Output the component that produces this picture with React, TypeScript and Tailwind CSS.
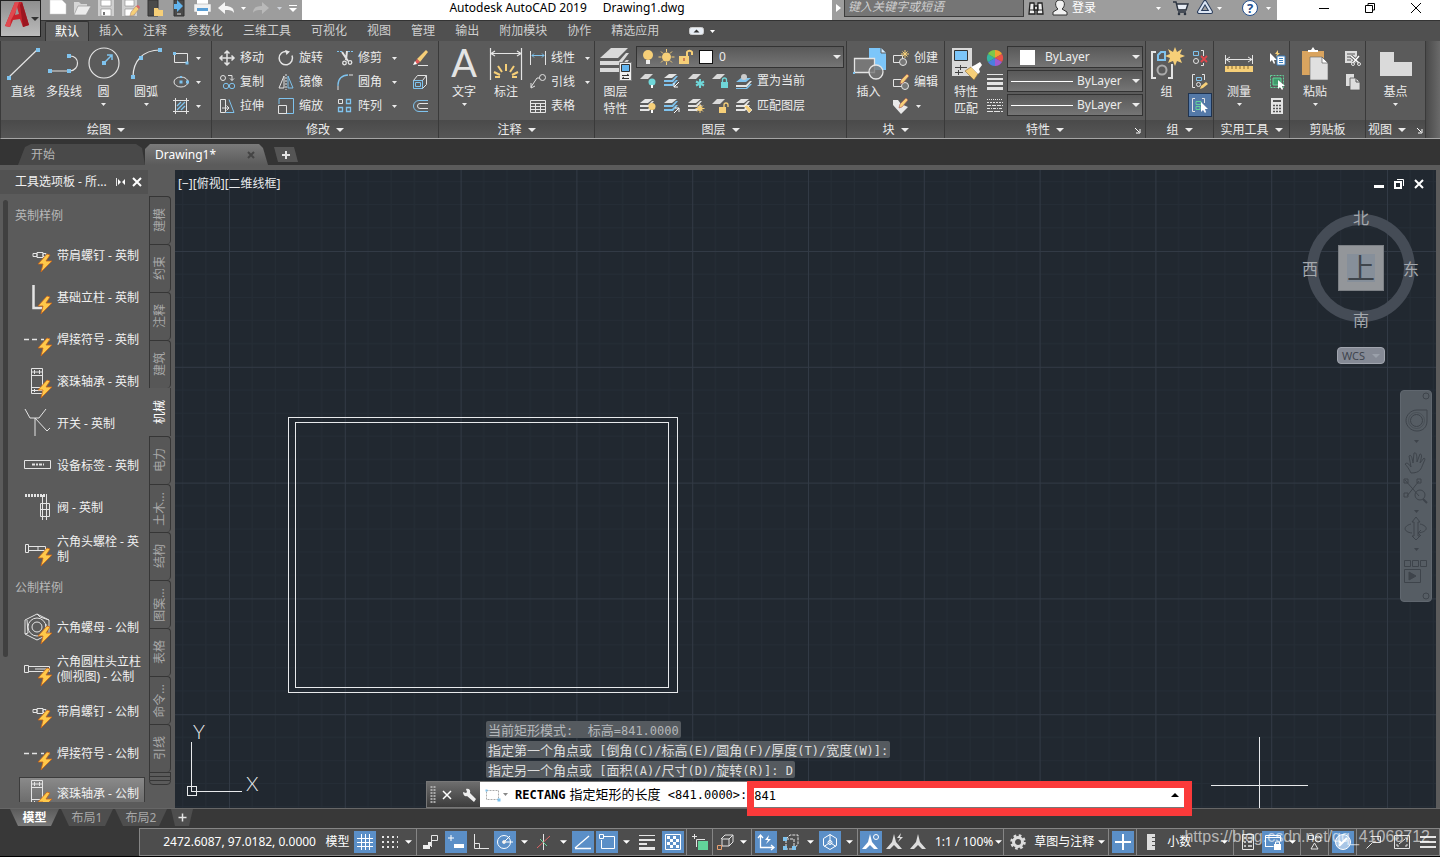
import type { ReactNode } from 'react';
import clsx from 'clsx';

const L = '#e4e4e4';
const B = '#7fc3ee';
const Y = '#f6cf78';
const G = '#62d39a';
const T = '#6fd6d8';

interface IconProps {
  w?: number;
  h?: number;
  children: ReactNode;
}

function Icon({ w = 16, h = 16, children }: IconProps) {
  return (
    <svg
      width={w}
      height={h}
      viewBox={`0 0 ${w} ${h}`}
      fill="none"
      stroke={L}
      className="shrink-0 overflow-visible"
      aria-hidden="true"
    >
      {children}
    </svg>
  );
}

function Dot({ x, y, r = 2 }: { x: number; y: number; r?: number }) {
  return <rect x={x - r} y={y - r} width={r * 2} height={r * 2} fill={B} stroke="none" />;
}

function Caret({ className }: { className?: string }) {
  return (
    <svg width="5" height="3" viewBox="0 0 5 3" className={clsx('shrink-0 fill-current', className)} aria-hidden="true">
      <path d="M0 0h5L2.5 3z" />
    </svg>
  );
}

function BigCaret({ className }: { className?: string }) {
  return (
    <svg width="8" height="4" viewBox="0 0 8 4" className={clsx('shrink-0 fill-current', className)} aria-hidden="true">
      <path d="M0 0h8L4 4z" />
    </svg>
  );
}

function Launcher() {
  return (
    <Icon w={7} h={7}>
      <path d="M1 1l4 4M6 2v4H2" stroke="#fff" />
    </Icon>
  );
}

/* ---------- title bar ---------- */

const quickIcons: { name: string; icon: ReactNode }[] = [
  {
    name: '新建',
    icon: <path d="M1 0h12l4 4v10H1z" fill="#fff" stroke="#ccc" strokeWidth=".5" />,
  },
  {
    name: '打开',
    icon: (
      <>
        <path d="M1 15V2h5l2 2h6v3" fill="#d6d6d6" stroke="none" />
        <path d="M1 15L5 6h13l-5 9z" fill="#ececec" stroke="#999" strokeWidth=".7" />
      </>
    ),
  },
  {
    name: '保存',
    icon: (
      <>
        <path d="M1 0h16v16H1z" fill="#cfcfcf" stroke="none" />
        <path d="M4 0h10v6H4zM4 9h10v7H4z" fill="#fff" stroke="#888" strokeWidth=".6" />
        <path d="M7 12v3" stroke="#777" strokeWidth="2" />
      </>
    ),
  },
  {
    name: '另存为',
    icon: (
      <>
        <path d="M1 0h15v16H1z" fill="#cfcfcf" stroke="none" />
        <path d="M4 0h9v6H4zM4 9h9v7H4z" fill="#fff" stroke="#888" strokeWidth=".6" />
        <path d="M9 16l1-4 5-6 3 3-5 6z" fill={Y} stroke="#a87" strokeWidth=".6" />
        <path d="M15 6l3 3 1-2-2-2z" fill="#d66" stroke="none" />
      </>
    ),
  },
  {
    name: '从移动设备打开',
    icon: (
      <>
        <path d="M3 0h10v16H3z" fill="#4a4a4a" stroke="#333" />
        <path d="M9 16V8h4l1 2h4v6z" fill={Y} stroke="none" />
      </>
    ),
  },
  {
    name: '保存到移动设备',
    icon: (
      <>
        <path d="M5 0h10v16H5z" fill="#4a4a4a" stroke="#333" />
        <path d="M5 4h3V0l6 6-6 6V9H5z" fill="#62b4ee" stroke="none" />
        <path d="M8 14h4" stroke="#ddd" />
      </>
    ),
  },
  {
    name: '打印',
    icon: (
      <>
        <path d="M4 0h11v5H4z" fill="#fff" stroke="none" />
        <path d="M1 4h17v8H1z" fill="#f2f2f2" stroke="#999" strokeWidth=".5" />
        <path d="M4 8h11v3H4z" fill="#5a9fd6" stroke="none" />
        <path d="M4 11h11v4H4z" fill="#fff" stroke="none" />
      </>
    ),
  },
  {
    name: '放弃',
    icon: <path d="M1 8l7-6v4c6 0 9 2 9 7-2-3-4-3-9-3v4z" fill="#f5f5f5" stroke="none" />,
  },
];

function TitleBar() {
  return (
    <header className="flex h-5 shrink-0 bg-white text-xs leading-4 text-white">
      <div className="flex items-center bg-[#9d9d9d] pb-1 pl-[46px]">
        {quickIcons.map((q) => (
          <button key={q.name} aria-label={q.name} className="flex w-6 justify-center">
            <Icon w={18} h={17}>{q.icon}</Icon>
          </button>
        ))}
        <button aria-label="放弃列表" className="flex w-[10px] justify-center">
          <Caret />
        </button>
        <button aria-label="重做" className="flex w-[26px] justify-center">
          <Icon w={18} h={17}>
            <path d="M17 8l-7-6v4C4 6 1 8 1 13c2-3 4-3 9-3v4z" fill="#b9b9b9" stroke="none" />
          </Icon>
        </button>
        <button aria-label="重做列表" className="flex w-[10px] justify-center text-gray-300">
          <Caret />
        </button>
        <button aria-label="自定义快速访问工具栏" className="flex w-[18px] flex-col items-center gap-0.5">
          <span className="h-px w-2 bg-white" />
          <BigCaret />
        </button>
      </div>

      <h1 className="flex flex-1 items-center justify-center gap-4 whitespace-nowrap pb-1 text-black">
        <span>Autodesk AutoCAD 2019</span>
        <span>Drawing1.dwg</span>
      </h1>

      <div className="flex w-[445px] items-center bg-[#9d9d9d] pb-1">
        <button aria-label="隐藏搜索" className="flex w-3 justify-center">
          <Icon w={5} h={8}>
            <path d="M0 0l5 4-5 4z" fill="#fff" stroke="none" />
          </Icon>
        </button>
        <input
          aria-label="搜索"
          placeholder="键入关键字或短语"
          className="-mt-1 h-[22px] w-[180px] border border-[#3c3c3c] bg-[#757575] px-[3px] italic placeholder:text-[#cfcfcf]"
        />
        <button aria-label="搜索帮助" className="ml-1 w-4">
          <Icon>
            <path d="M2 3h4l1 11H1zM10 3h4l1 11H9zM6 6h4v4H6z" fill="#eee" stroke="#222" strokeWidth="1.3" />
            <path d="M2 10h4M10 10h4" stroke="#222" />
          </Icon>
        </button>
        <button className="ml-2 flex items-center gap-1">
          <Icon>
            <path d="M8 0c6 0 5 7 2 9l5 3v3H1v-3l5-3C3 7 2 0 8 0z" fill="#f2f2f2" stroke="#333" />
          </Icon>
          登录
        </button>
        <Caret className="ml-[60px]" />
        <button aria-label="应用商店" className="ml-3">
          <Icon>
            <path d="M4 4h11l-2 5H5z" fill="#e9eef6" stroke="none" />
            <path d="M0 2h3l2 8h8l2-6H4M5 12h8" stroke="#2b3340" strokeWidth="1.4" />
            <circle cx="6" cy="14" r="1.3" fill="#2b3340" stroke="none" />
            <circle cx="12" cy="14" r="1.3" fill="#2b3340" stroke="none" />
          </Icon>
        </button>
        <button aria-label="保持连接" className="ml-2 flex items-center gap-1">
          <Icon>
            <path d="M8 2L2 12h12z" stroke="#2b3d5c" strokeWidth="4" strokeLinejoin="round" />
            <path d="M8 2L2 12h12z" stroke="#dde7f5" strokeWidth="2" strokeLinejoin="round" />
          </Icon>
          <Caret />
        </button>
        <button aria-label="帮助" className="ml-5 flex items-center gap-2">
          <span className="flex size-4 items-center justify-center rounded-full border border-[#24508e] bg-white text-[13px] font-bold text-[#24508e]">
            ?
          </span>
          <Caret />
        </button>
      </div>

      <div className="flex w-[163px] items-center gap-[34px] pb-1 pl-[41px]">
        <button aria-label="最小化"><Icon w={12} h={12}><path d="M1 6.5h10" stroke="#000" /></Icon></button>
        <button aria-label="还原">
          <Icon w={12} h={12}><path d="M1.5 3.5h7v7h-7zM4 3V1.5h6.500V8H9" stroke="#000" /></Icon>
        </button>
        <button aria-label="关闭"><Icon w={12} h={12}><path d="M1 1l10 10M11 1L1 11" stroke="#000" /></Icon></button>
      </div>
    </header>
  );
}

function AppButton() {
  return (
    <button
      aria-label="应用程序菜单"
      className="absolute left-0 top-0 z-10 flex h-[37px] w-[41px] items-center border border-[#222] bg-linear-to-b from-[#8f8f8f] to-[#bcbcbc] pl-1 text-[#333]"
    >
      <Icon w={26} h={34}>
        <path d="M0 24L10 0h7l7 23-6 2-3-8-7 1-3 7z" fill="#c8232c" stroke="none" />
        <path d="M10 0h4l-3 9-5 9-1 7-5-1z" fill="#e04a50" stroke="none" />
        <path d="M18 25l6-2L17 0l-2 3z" fill="#9c1620" stroke="none" />
        <path d="M12 5l2 7-4 1z" fill="#9a9a9a" stroke="none" />
      </Icon>
      <BigCaret />
    </button>
  );
}

const ribbonTabs = ['默认', '插入', '注释', '参数化', '三维工具', '可视化', '视图', '管理', '输出', '附加模块', '协作', '精选应用'];

function RibbonTabs() {
  return (
    <nav className="flex h-[21px] shrink-0 items-end border-t border-[#333] bg-[#505050] pl-[45px] text-xs leading-4">
      {ribbonTabs.map((tab, i) => (
        <button
          key={tab}
          className={clsx(
            'h-5',
            i === 0
              ? 'rounded-t-xs border border-b-0 border-[#333] bg-[#5f5f5f] px-[9px] text-white'
              : 'px-[10px] text-[#cfcfcf]',
          )}
        >
          {tab}
        </button>
      ))}
      <button aria-label="最小化功能区" className="ml-5 flex h-5 items-center gap-1.5 text-white">
        <Icon w={15} h={8}>
          <rect x=".5" y=".5" width="14" height="7" rx="2" fill="#e8eef5" stroke="#ccc" />
          <path d="M4.500 5.500h6l-3-3z" fill="#333" stroke="none" />
        </Icon>
        <Caret />
      </button>
    </nav>
  );
}

/* ---------- ribbon ---------- */

interface PanelProps {
  title: string;
  className: string;
  menu?: boolean;
  launcher?: boolean;
  children: ReactNode;
}

function Panel({ title, className, menu = true, launcher, children }: PanelProps) {
  return (
    <section className={clsx('flex shrink-0 flex-col border-r border-[#3a3a3a]', className)}>
      <div className="flex h-[79px] pt-[5px]">{children}</div>
      <div className="relative flex h-[18px] items-center justify-center gap-1.5 bg-linear-to-b from-[#4a4a4a] to-[#565656] pt-0.5">
        <span>{title}</span>
        {menu && <BigCaret />}
        {launcher && (
          <button aria-label={`${title}设置`} className={title === '视图' ? 'ml-1' : 'absolute right-1'}>
            <Launcher />
          </button>
        )}
      </div>
    </section>
  );
}

interface BigButtonProps {
  label: ReactNode;
  className: string;
  caret?: boolean;
  children: ReactNode;
}

function BigButton({ label, className, caret, children }: BigButtonProps) {
  return (
    <button className={clsx('flex shrink-0 flex-col items-center whitespace-nowrap', className)}>
      <Icon w={34} h={36}>{children}</Icon>
      <span className="mt-px leading-[17px]">{label}</span>
      {caret && <Caret className="mt-[3px]" />}
    </button>
  );
}

interface SmallButtonProps {
  label?: string;
  name?: string;
  caret?: boolean;
  children: ReactNode;
}

function SmallButton({ label, name, caret, children }: SmallButtonProps) {
  return (
    <button aria-label={label ?? name} className="flex h-6 items-center whitespace-nowrap">
      <Icon>{children}</Icon>
      {label && <span className="ml-[5px]">{label}</span>}
      {caret && <Caret className={label ? 'ml-[10px]' : 'ml-[7px]'} />}
    </button>
  );
}

function Sheets({ color = L, color2 = L }: { color?: string; color2?: string }) {
  return (
    <g stroke="none">
      <path d="M0 5l5-4h8L8 5z" fill={L} />
      <path d="M0 7h8l4-4h2L9 9H0z" fill={color} />
      <path d="M0 11h8l4-4h2l-5 6H0z" fill={color2} />
    </g>
  );
}

const sheet = <path d="M0 6l5-5h8L8 6z" fill="#d9d9d9" stroke="none" />;

const layerTools: { name: string; icon: ReactNode }[][] = [
  [
    {
      name: '关',
      icon: (
        <>
          {sheet}
          <circle cx="12" cy="9" r="3.500" fill={T} stroke="none" />
          <path d="M11 12h2v3h-2z" fill="#fff" stroke="none" />
        </>
      ),
    },
    { name: '隔离', icon: <><Sheets color={B} color2={B} /><path d="M15 9l-5 5m0-4v4h4" stroke="#fff" /></> },
    {
      name: '冻结',
      icon: <>{sheet}<path d="M12 6v9M8 8.500l8 4M16 8.500l-8 4" stroke={T} strokeWidth="2" /></>,
    },
    {
      name: '锁定',
      icon: (
        <>
          {sheet}
          <path d="M9 9h7v6H9z" fill={T} stroke="none" />
          <path d="M10.500 9V7a2 2 0 014 0v2" stroke={T} strokeWidth="1.300" />
        </>
      ),
    },
  ],
  [
    {
      name: '打开所有图层',
      icon: (
        <>
          <Sheets />
          <circle cx="12" cy="8.500" r="3.500" fill={Y} stroke="none" />
          <path d="M11 12h2v3h-2z" fill="#fff" stroke="none" />
        </>
      ),
    },
    { name: '取消隔离', icon: <><Sheets color={B} color2={B} /><path d="M10 15l5-5m-4 0h4v4" stroke="#fff" /></> },
    {
      name: '解冻所有图层',
      icon: (
        <>
          <Sheets />
          <path d="M12 6v9M7.500 10.500h9M9 7.500l6 6M15 7.500l-6 6" stroke={Y} />
          <circle cx="12" cy="10.500" r="2.500" fill={Y} stroke="none" />
        </>
      ),
    },
    {
      name: '解锁',
      icon: (
        <>
          {sheet}
          <path d="M7 9h7v6H7z" fill={Y} stroke="none" />
          <path d="M12 9V7a2 2 0 014 0v2" stroke={Y} strokeWidth="1.300" />
        </>
      ),
    },
  ],
];

function Combo({ label, value, lead, className }: { label: string; value: string; lead: ReactNode; className: string }) {
  return (
    <label className="flex h-[22px] items-center border border-[#333] bg-linear-to-b from-[#595959] to-[#757575] pr-[2px]">
      {lead}
      <select aria-label={label} className={clsx('min-w-0 flex-1 appearance-none leading-4 outline-none', className)}>
        <option>{value}</option>
      </select>
      <BigCaret />
    </label>
  );
}

function Ribbon() {
  return (
    <div className="flex h-[98px] shrink-0 border-b border-l border-b-[#a5a5a5] border-l-[#3a3a3a] bg-[#5b5b5b] text-xs leading-4 text-[#ececec]">
      <Panel title="绘图" className="w-[211px]">
        <BigButton label="直线" className="w-[44px]">
          <path d="M3 31L32 3" strokeWidth="1.200" />
          <Dot x={3} y={32} />
          <Dot x={32} y={4} />
        </BigButton>
        <BigButton label="多段线" className="w-[38px]">
          <path d="M3 25h20c10-1 10-15 0-15" strokeWidth="1.200" />
          <Dot x={3} y={25} />
          <Dot x={22} y={25} />
          <Dot x={22} y={10} />
        </BigButton>
        <BigButton label="圆" className="w-[41px]" caret>
          <circle cx="17" cy="17" r="15" strokeWidth="1.200" />
          <path d="M17 17l8-8m-5 0h5v5" stroke={B} strokeWidth="1.500" />
          <Dot x={17} y={17} />
        </BigButton>
        <BigButton label="圆弧" className="w-[44px]" caret>
          <path d="M4 31C4 15 14 4 31 4" strokeWidth="1.200" />
          <Dot x={4} y={31} />
          <Dot x={12} y={12} />
          <Dot x={31} y={4} />
        </BigButton>
        <div className="flex flex-col pl-[5px]">
          <SmallButton name="矩形" caret>
            <path d="M1.500 3.500h13v9h-13z" />
            <Dot x={1.500} y={3.500} r={1.500} />
            <Dot x={14} y={13} r={1.500} />
          </SmallButton>
          <SmallButton name="椭圆" caret>
            <ellipse cx="8" cy="8" rx="7" ry="5" />
            <Dot x={8} y={8} r={1.500} />
            <Dot x={14.500} y={8} r={1.500} />
            <Dot x={8} y={3} r={1} />
          </SmallButton>
          <SmallButton name="图案填充" caret>
            <path d="M2.500 0v16M13.500 0v16M0 2.500h16M0 13.500h16" />
            <path d="M4 8l4-4M4 12l8-8M8 12l4-4" stroke={B} strokeWidth="1.300" />
          </SmallButton>
        </div>
      </Panel>

      <Panel title="修改" className="w-[227px]">
        <div className="ml-[7px] w-[59px]">
          <SmallButton label="移动">
            <path d="M8 1v14M1 8h14M5.500 3.500L8 1l2.500 2.500M5.500 12.500L8 15l2.500-2.500M3.500 5.500L1 8l2.500 2.500M12.500 5.500L15 8l-2.500 2.500" strokeWidth="1.500" />
          </SmallButton>
          <SmallButton label="复制">
            <circle cx="4" cy="4" r="2.500" />
            <path d="M9 1.500h4v5m-2-2l2 2 2-2" />
            <circle cx="7" cy="12" r="2.700" stroke={B} />
            <circle cx="13" cy="12" r="2.700" stroke={B} />
          </SmallButton>
          <SmallButton label="拉伸">
            <path d="M1.500 1.500h5v13h-5z" />
            <path d="M10 1.500l5 13H7" stroke={B} />
            <path d="M3 10h7m-2.500-2.500L10 10l-2.500 2.500" />
          </SmallButton>
        </div>
        <div className="w-[59px]">
          <SmallButton label="旋转">
            <path d="M9 1.500a6.700 6.700 0 105 4" strokeWidth="1.500" />
            <path d="M7 0l5 1.500L8.500 5z" fill={L} stroke="none" />
          </SmallButton>
          <SmallButton label="镜像">
            <path d="M6 2v12H1z" />
            <path d="M10 2v12h5z" stroke={B} />
            <path d="M8 0v16" strokeDasharray="2 1" />
          </SmallButton>
          <SmallButton label="缩放">
            <path d="M1 6V.500h14.500v15H8" stroke={B} />
            <path d="M.500 7.500h8v8h-8z" />
          </SmallButton>
        </div>
        <div className="w-[75px]">
          <SmallButton label="修剪" caret>
            <path d="M0 1.500h5M11 1.500h5" stroke={B} strokeDasharray="2 1" />
            <path d="M5 2l6 9M10 1l-1 9" strokeWidth="2" />
            <circle cx="7.500" cy="13" r="1.800" strokeWidth="1.300" />
            <circle cx="13" cy="12.500" r="1.800" strokeWidth="1.300" />
          </SmallButton>
          <SmallButton label="圆角" caret>
            <path d="M1 12v-1C1 5 5 1 11 1" stroke={B} strokeWidth="1.300" />
            <path d="M12 1h4M1 12v4" />
          </SmallButton>
          <SmallButton label="阵列" caret>
            <path d="M1.500 1.500h4v4h-4z" />
            <path d="M9.500 1.500h4v4h-4zM1.500 9.500h4v4h-4zM9.500 9.500h4v4h-4z" stroke={B} strokeWidth="1.300" />
          </SmallButton>
        </div>
        <div>
          <SmallButton name="删除">
            <path d="M5 9l9-9 2 2-8 10z" fill={Y} stroke="none" />
            <path d="M5 9l3 3-3 2-2-2z" fill="#e55a5a" stroke="none" />
            <path d="M3 11l2 3-4 1z" fill="#fff" stroke="none" />
            <path d="M6 15.500h10" />
          </SmallButton>
          <SmallButton name="分解">
            <path d="M1.500 6.500h9v8h-9zM3.500 8.500h5v4h-5z" stroke={B} />
            <path d="M1.500 6.500l4-5h9l-4 5M14.500 1.500v9l-4 4" />
          </SmallButton>
          <SmallButton name="偏移">
            <path d="M16 2.500H7a5.500 5.500 0 000 11h9" stroke={B} />
            <path d="M16 5.500H8a2.500 2.500 0 000 5h8" />
          </SmallButton>
        </div>
      </Panel>

      <Panel title="注释" className="w-[156px]">
        <BigButton label="文字" className="ml-1 w-[42px]" caret>
          <text x="17" y="31" textAnchor="middle" fontSize="38" fill={L} stroke="none" className="font-['Lato']">
            A
          </text>
        </BigButton>
        <BigButton label="标注" className="w-[42px]">
          <path d="M1.500 2v32M32.500 2v32M2 7.500h30M6 5L2 7.500 6 10M28 5l4 2.500-4 2.500" strokeWidth="1.200" />
          <path d="M17 18v7M9 20l4 6M25 20l-4 6M5 26l6 3M29 26l-6 3M6 31h5M23 31h5" stroke={Y} strokeWidth="2" />
        </BigButton>
        <div className="ml-[3px]">
          <SmallButton label="线性" caret>
            <path d="M.500 1v14M15.500 1v14" />
            <path d="M2 5.500h12M4 3.500l-2 2 2 2M12 3.500l2 2-2 2" stroke={B} />
          </SmallButton>
          <SmallButton label="引线" caret>
            <circle cx="12.500" cy="3.500" r="3" />
            <path d="M10 4H7l-6 9M1 9v5l4-2" />
          </SmallButton>
          <SmallButton label="表格">
            <path d="M.500 2.500h15v12H.500zM.500 5.500h15M.500 8.500h15M.500 11.500h15M5.500 5v9M10.500 5v9" />
          </SmallButton>
        </div>
      </Panel>

      <Panel title="图层" className="w-[252px]">
        <BigButton label={<>图层<br />特性</>} className="w-[41px]">
          <g fill="#d9d9d9" stroke="none">
            <path d="M1 12L12 2h17L19 12z" />
            <path d="M1 15h19l7-8h3l-9 12H1z" />
            <path d="M1 22h19l7-8h3l-9 12H1z" />
          </g>
          <path d="M20.500 16.500h12v18h-12z" fill="#f0f0f0" stroke="#777" />
          <path d="M22.500 18.500h8v7h-8z" fill="#62b4ee" stroke="#333" />
          <path d="M23 29.500h7l-2-1.500M30 32.500h-7l2-1.500" stroke="#333" />
        </BigButton>
        <div className="min-w-0 flex-1 pr-[2px]">
          <Combo
            label="图层"
            value="0"
            className="pl-1"
            lead={
              <Icon w={78} h={18}>
                <g stroke="none" fill={Y}>
                  <circle cx="11" cy="7" r="5" />
                  <circle cx="29.500" cy="9" r="4.500" />
                  <path d="M42 8h10v8H42z" />
                </g>
                <path d="M9 12h4v4H9z" fill="#eee" stroke="none" />
                <path d="M29.500 1v3M29.500 14v3M21.500 9h3M34.500 9h3M24 3.500l2 2M35 3.500l-2 2M24 14.500l2-2M35 14.500l-2-2" stroke={Y} />
                <path d="M50 8V4a3 3 0 015 0v3" stroke={Y} strokeWidth="2" />
                <path d="M47 10v3" stroke="#a33" />
                <rect x="62.500" y="2.500" width="13" height="13" fill="#fff" stroke="#111" />
              </Icon>
            }
          />
          {layerTools.map((row, i) => (
            <div key={i} className="mt-px flex h-6 items-center">
              {row.map((tool) => (
                <div key={tool.name} className="flex w-6 justify-center">
                  <SmallButton name={tool.name}>{tool.icon}</SmallButton>
                </div>
              ))}
              <div className="ml-1">
                {i === 0 ? (
                  <SmallButton label="置为当前">
                    <path d="M0 9l5-4h10l-5 4z" fill={B} stroke="none" />
                    <path d="M0 12h10l4-4h2l-5 6H0z" fill={L} stroke="none" />
                    <path d="M0 15h10l4-4h2l-5 5H0z" fill={B} stroke="none" />
                    <circle cx="8" cy="4" r="3" fill="#ccc" stroke="none" />
                  </SmallButton>
                ) : (
                  <SmallButton label="匹配图层">
                    <Sheets />
                    <path d="M8 8l3-1 5 5-3 3z" fill={Y} stroke="#fff" strokeWidth=".6" />
                  </SmallButton>
                )}
              </div>
            </div>
          ))}
        </div>
      </Panel>

      <Panel title="块" className="w-[98px]">
        <BigButton label="插入" className="w-[43px]">
          <path d="M17 2h12l5 5v17H17z" fill="#7cc6fa" stroke="none" />
          <path d="M29 2v5h5" fill="#d5ecff" stroke="#5b5b5b" />
          <path d="M2.500 12.500h20v14h-20z" fill="#777" strokeWidth="1.300" />
          <circle cx="24" cy="26" r="7" fill="#777" fillOpacity=".8" strokeWidth="1.300" />
          <Dot x={2} y={27} r={1} />
        </BigButton>
        <div className="ml-[3px]">
          <SmallButton label="创建">
            <path d="M.500 5.500h9v7h-9z" />
            <circle cx="10" cy="12" r="3.500" fill="#777" />
            <path d="M12 0v8M8 4h8M9.500 1.500l5 5M14.500 1.500l-5 5" stroke={Y} />
          </SmallButton>
          <SmallButton label="编辑">
            <path d="M.500 5.500h9v7h-9z" />
            <circle cx="12" cy="12" r="3.500" fill="#777" />
            <path d="M7 10l1-4 6-6 2 2-6 7z" fill={Y} stroke="#a55" strokeWidth=".6" />
          </SmallButton>
          <SmallButton name="编辑属性" caret>
            <path d="M0 2h5l3 4 7 3-7 7-8-9z" fill="#e9e9e9" stroke="none" />
            <path d="M6 10l1-4 6-6 2 2-6 7z" fill={Y} stroke="#a55" strokeWidth=".6" />
          </SmallButton>
        </div>
      </Panel>

      <Panel title="特性" className="w-[201px]" launcher>
        <BigButton label={<>特性<br />匹配</>} className="w-[42px]">
          <path d="M3 2h20v28H3z" fill="#d9d9d9" stroke="none" />
          <path d="M5.500 4.500h13v10h-13z" fill="#7cc6fa" stroke="#333" />
          <path d="M6 21.500h12M6 26.500h8M11.500 19v5M9.500 24v5" stroke="#444" />
          <path d="M16 25l6-4 7 7-4 6z" fill={Y} stroke="#8a6a30" strokeWidth=".6" />
          <path d="M22 21l4-2 5-3 2 3-3 4 1 3-2 2z" fill="#fff" stroke="none" />
        </BigButton>
        <div className="flex w-5 flex-col">
          <SmallButton name="颜色">
            <g stroke="none">
              <path d="M8 8V0a8 8 0 017 4z" fill="#f0a030" />
              <path d="M8 8l7-4a8 8 0 010 8z" fill="#e8504a" />
              <path d="M8 8l7 4a8 8 0 01-7 4z" fill="#a05ad0" />
              <path d="M8 8v8a8 8 0 01-7-4z" fill="#4a7fe0" />
              <path d="M8 8l-7 4a8 8 0 010-8z" fill="#35b5a0" />
              <path d="M8 8L1 4a8 8 0 017-4z" fill="#7cc84a" />
            </g>
          </SmallButton>
          <SmallButton name="线宽">
            <path d="M0 .500h16" />
            <path d="M0 5h16" strokeWidth="2" />
            <path d="M0 9.500h16" strokeWidth="3" />
            <path d="M0 14.500h16" strokeWidth="3" />
          </SmallButton>
          <SmallButton name="线型">
            <path d="M0 1.500h16" strokeDasharray="1 1" />
            <path d="M0 4.500h16" strokeDasharray="2 1" />
            <path d="M0 7.500h16" strokeDasharray="4 1" />
            <path d="M0 10.500h16" strokeDasharray="3 1 1 1" />
            <path d="M0 13.500h16" strokeDasharray="6 1" />
          </SmallButton>
        </div>
        <div className="flex min-w-0 flex-1 flex-col gap-0.5 pr-[2px]">
          <Combo label="对象颜色" value="ByLayer" className="pl-2.5" lead={<span className="ml-3 size-[15px] bg-white" />} />
          <Combo label="线宽" value="ByLayer" className="pl-1" lead={<span className="ml-[3px] h-px w-[62px] bg-white" />} />
          <Combo label="线型" value="ByLayer" className="pl-1" lead={<span className="ml-[3px] h-px w-[62px] bg-white" />} />
        </div>
      </Panel>

      <Panel title="组" className="w-[68px]">
        <BigButton label="组" className="w-[41px]">
          <path d="M6 6H2v26h4M18 32h4V18" strokeWidth="2" />
          <path d="M8 14V9l3-3h4v8z" stroke={B} strokeWidth="2" />
          <circle cx="12" cy="24" r="4.500" stroke="#aaa" strokeWidth="2" />
          <path d="M25 1l2 5 5-3-2 5 5 2-5 2 2 5-5-2-2 5-2-5-5 2 2-5-5-2 5-2-2-5 5 3z" fill={Y} stroke="none" />
        </BigButton>
        <div className="flex flex-1 flex-col items-center">
          <SmallButton name="解除编组">
            <path d="M1.500 1.500h5v4h-5z" stroke={B} />
            <circle cx="4" cy="11" r="2.500" />
            <path d="M9 .500h2.500V6M11.500 13v2.500H9" />
            <path d="M9 6l6 6M15 6l-6 6" stroke="#e0454a" strokeWidth="1.800" />
          </SmallButton>
          <SmallButton name="组编辑">
            <path d="M3 .500H.500v13H3M10 .500h2.500V6" />
            <path d="M4.500 3.500h5v3h-5z" stroke={B} />
            <circle cx="6.500" cy="10.500" r="2" />
            <path d="M8 15l1-3 5-4 2 2-5 4z" fill={Y} stroke="none" />
          </SmallButton>
          <div className="-mt-px flex w-6 justify-center border border-[#1f3350] bg-[#5479a8]">
            <div className="-my-px">
              <SmallButton name="启用组选择">
                <path d="M3 1.500H.500v13H3M10 1.500h2.500V6" />
                <path d="M4 4.500h5v3H4zM4 9.500h4v3H4z" stroke={G} />
                <path d="M9 5v10l2-2 2 3 1-1-1-3h3z" fill="#fff" stroke="none" />
              </SmallButton>
            </div>
          </div>
        </div>
      </Panel>

      <Panel title="实用工具" className="w-[76px]">
        <BigButton label="测量" className="w-[50px]" caret>
          <path d="M3.500 9v9M30.500 9v9M4 13.500h26M8 11l-4 2.500L8 16M26 11l4 2.500-4 2.500" />
          <path d="M3 20h28v6H3z" fill={Y} stroke="none" />
          <path d="M6 20v3M10 20v3M14 20v3M18 20v3M22 20v3M26 20v3" stroke="#8a6a30" />
        </BigButton>
        <div className="flex flex-1 flex-col items-center">
          <SmallButton name="快速选择">
            <path d="M9 0L6 4h2l-1 3 4-4H9z" fill={Y} stroke="none" />
            <path d="M1 3v9l2-2 2 4 1-1-1-3h3z" fill="#fff" stroke="none" />
            <path d="M8 6h8v9H8z" fill="#fff" stroke="#3a7fc0" />
            <path d="M10 8.500h4M10 10.500h4M10 12.500h4" stroke="#3a7fc0" />
          </SmallButton>
          <SmallButton name="全部选择">
            <path d="M1.500 1.500h13v12h-13z" stroke={G} strokeDasharray="2 1" />
            <path d="M4 4h8v7H4z" fill="#3f9a6a" stroke={G} />
            <path d="M9 6v9l2-2 2 3 1-1-1-3h3z" fill="#fff" stroke="none" />
          </SmallButton>
          <SmallButton name="计算器">
            <path d="M2 0h12v16H2z" fill="#e4e4e4" stroke="none" />
            <path d="M4 3h8" stroke="#555" strokeWidth="2" />
            <path d="M4 7.500h8M4 10.500h8M4 13.500h8" stroke="#555" strokeWidth="1.500" strokeDasharray="2 1" />
          </SmallButton>
        </div>
      </Panel>

      <Panel title="剪贴板" className="w-[76px]" menu={false}>
        <BigButton label="粘贴" className="w-[50px]" caret>
          <path d="M4 5h22v24H4z" fill="#d9a45f" stroke="none" />
          <path d="M10 6V4h3l2-3 2 3h3v2z" fill="#fff" stroke="none" />
          <path d="M12 11h12l6 6v17H12z" fill="#e0e0e0" stroke="#666" strokeWidth=".6" />
          <path d="M24 11v6h6z" fill="#fff" stroke="#444" strokeWidth=".6" />
        </BigButton>
        <div className="flex flex-1 flex-col items-center">
          <SmallButton name="剪切">
            <path d="M0 1h12v12H0z" fill="#ddd" stroke="none" />
            <path d="M2 4h8M2 7h4M2 10h4" stroke="#555" />
            <path d="M6 6l8 7M14 6l-6 7" stroke="#5b5b5b" strokeWidth="3" />
            <path d="M6 6l8 7M14 6l-6 7" stroke="#fff" strokeWidth="1.500" />
            <circle cx="8" cy="14" r="1.500" />
            <circle cx="14" cy="14" r="1.500" />
          </SmallButton>
          <SmallButton name="复制裁剪">
            <path d="M1 0h8v12H1z" fill="#ddd" stroke="none" />
            <path d="M5 4h6l4 4v8H5z" fill="#ddd" stroke="#555" strokeWidth=".800" />
            <path d="M11 4v4h4" stroke="#555" />
          </SmallButton>
        </div>
      </Panel>

      <Panel title="视图" className="w-[60px]" launcher>
        <BigButton label="基点" className="w-full" caret>
          <path d="M1 6h14v10h18v14H1z" fill="#dadada" stroke="none" />
        </BigButton>
      </Panel>
      <div className="flex-1 bg-linear-to-r from-[#4a4a4a] to-[#6a6a6a]" />
    </div>
  );
}

function FileTabs() {
  return (
    <nav className="flex h-[26px] shrink-0 items-end bg-[#343434] pl-[18px] text-xs leading-4">
      <button className="h-[21px] w-[127px] bg-[#494949] pl-[13px] text-left text-[#b5b5b5] [clip-path:polygon(0_100%,7px_14%,13px_0,calc(100%-9px)_0,calc(100%-3px)_4px,100%_100%)]">
        开始
      </button>
      <div className="flex h-[21px] w-[123px] items-center bg-linear-to-b from-[#7a7a7a] to-[#5b5b5b] pl-[10px] text-white [clip-path:polygon(0_100%,0_5px,5px_0,calc(100%-9px)_0,calc(100%-5px)_4px,100%_100%)]">
        <button className="flex-1 text-left">Drawing1*</button>
        <button aria-label="关闭图形" className="mr-[13px]">
          <Icon w={8} h={8}><path d="M1 1l6 6M7 1L1 7" stroke="#444" strokeWidth="2" /></Icon>
        </button>
      </div>
      <button
        aria-label="新图形"
        className="mb-[3px] ml-[6px] flex h-[15px] w-6 items-center justify-center bg-[#555] [clip-path:polygon(0_0,calc(100%-4px)_0,100%_100%,4px_100%)]"
      >
        <Icon w={10} h={10}><path d="M1 5h8M5 1v8" strokeWidth="2" /></Icon>
      </button>
    </nav>
  );
}

/* ---------- tool palette ---------- */

const bolt = (
  <path d="M24 17l-9 10h5l-2 8 11-11h-6l4-6z" fill="#ffc94a" stroke="#c8641a" strokeWidth=".800" />
);

const screw = (
  <>
    <path d="M10 16.500h4v3h-4zM14 15.500h6v5h-6zM20 16.500h3v3h-3z" />
    {bolt}
  </>
);
const post = <><path d="M10.500 6v23h9" strokeWidth="2.500" />{bolt}</>;
const weld = <><path d="M1 18.500h5M9 18.500h5M18 18.500h3M24 18.500h3" strokeWidth="1.500" />{bolt}</>;
const bearing = (
  <>
    <path d="M8.500 5.500h11v25h-11zM8.500 12.500h11M8.500 24.500h11M9 9h10M11.500 7v4M16.500 7v4M9 27.500h10M11.500 26v3" />
    {bolt}
  </>
);

const englishItems: { label: string; icon: ReactNode }[] = [
  { label: '带肩螺钉 - 英制', icon: screw },
  { label: '基础立柱 - 英制', icon: post },
  { label: '焊接符号 - 英制', icon: weld },
  { label: '滚珠轴承 - 英制', icon: bearing },
  { label: '开关 - 英制', icon: <path d="M2 4l5 9h9l7-9M12 13v18M12 13l12 13 3-3" /> },
  {
    label: '设备标签 - 英制',
    icon: <><path d="M1.500 13.500h26v8h-26z" /><path d="M9 17.500h12" strokeWidth="2" strokeDasharray="3 1 2 1" /></>,
  },
  {
    label: '阀 - 英制',
    icon: (
      <>
        <path d="M2 6.500h20" strokeWidth="3" strokeDasharray="2 1" />
        <path d="M19.500 6v25M23.500 5v26M17.500 14.500h9v13h-9zM17 20.500h10" />
      </>
    ),
  },
  { label: '六角头螺栓 - 英制', icon: <><path d="M2.500 13.500h3v8h-3zM5.500 15.500h17v4h-17zM15 15v4" />{bolt}</> },
];

const metricItems: { label: string; icon: ReactNode }[] = [
  {
    label: '六角螺母 - 公制',
    icon: (
      <>
        <path d="M14 5l12 6v14l-12 6-12-6V11zM14 5l3 3 9 3M2 25l3-1-1-13M26 25l-3-2v-8" />
        <circle cx="14" cy="18" r="9" />
        <circle cx="14" cy="18" r="5" />
        {bolt}
      </>
    ),
  },
  { label: '六角圆柱头立柱 (侧视图) - 公制', icon: <><path d="M1.500 14.500h4v7h-4zM5.500 15.500h21v5h-21zM12 18h14" />{bolt}</> },
  { label: '带肩螺钉 - 公制', icon: screw },
  { label: '焊接符号 - 公制', icon: weld },
  { label: '滚珠轴承 - 公制', icon: bearing },
];

function PaletteItem({ label, icon, selected }: { label: string; icon: ReactNode; selected?: boolean }) {
  return (
    <button
      className={clsx(
        'flex w-full items-center text-left leading-[15px]',
        selected
          ? 'mt-[3px] h-8 border border-[#3c3c3c] bg-linear-to-b from-[#8a8a8a] to-[#666]'
          : 'h-[42px]',
      )}
    >
      <span className={selected ? 'ml-[3px]' : 'ml-1'}>
        <Icon w={32} h={36}>{icon}</Icon>
      </span>
      <span className="ml-0.5 flex-1">{label}</span>
    </button>
  );
}

const paletteTabs = ['建模', '约束', '注释', '建筑', '机械', '电力', '土木...', '结构', '图案...', '表格', '命令...', '引线'];

function ToolPalette() {
  return (
    <aside className="flex w-[175px] shrink-0 flex-col pb-1.5 text-xs leading-4 text-[#f0f0f0]">
      <div className="mt-[5px] flex h-6 w-[148px] shrink-0 items-center bg-[#525252] pl-[15px]">
        <h2 className="flex-1 whitespace-nowrap">工具选项板 - 所...</h2>
        <button aria-label="自动隐藏" className="mr-2">
          <Icon w={9} h={8}>
            <path d="M.500 0v8" />
            <path d="M2 1l3 3-3 3zM9 1v6L6 4z" fill="#fff" stroke="none" />
          </Icon>
        </button>
        <button aria-label="关闭选项板" className="mr-[7px]">
          <Icon w={8} h={8}><path d="M0 0l8 8M8 0L0 8" stroke="#fff" strokeWidth="2" /></Icon>
        </button>
      </div>
      <div className="flex min-h-0 flex-1">
        <div className="ml-[3px] mt-1.5 h-[457px] w-[5px] shrink-0 rounded-sm bg-[#404040]" />
        <div className="ml-[7px] mt-1 w-[130px] overflow-hidden pl-1">
          <h3 className="-ml-1 flex h-9 items-center text-[#b8b8b8]">英制样例</h3>
          {englishItems.map((item) => (
            <PaletteItem key={item.label} {...item} />
          ))}
          <h3 className="-ml-1 flex h-9 items-center text-[#b8b8b8]">公制样例</h3>
          {metricItems.map((item, i) => (
            <PaletteItem key={item.label} {...item} selected={i === metricItems.length - 1} />
          ))}
        </div>
        <div className="ml-1 mt-0.5 flex w-[22px] flex-col">
          {paletteTabs.map((tab) => (
            <button
              key={tab}
              className={clsx(
                'flex h-12 shrink-0 items-center justify-center',
                tab === '机械'
                  ? 'border-r border-[#3a3a3a] text-white'
                  : 'rounded-r-sm border border-b-0 border-[#363636] bg-[#575757] text-[#a8a8a8]',
              )}
            >
              <span className="rotate-180 [text-orientation:sideways] [writing-mode:vertical-rl]">{tab}</span>
            </button>
          ))}
          <div className="h-1 border-x border-t border-[#363636]" />
          <div className="h-1 border-x border-t border-[#363636]" />
          <div className="h-[5px] rounded-b-sm border border-[#363636]" />
        </div>
      </div>
    </aside>
  );
}

/* ---------- drawing area ---------- */

const MAJOR = 115.8;

function GridDrawing() {
  return (
    <svg width="100%" height="100%" className="absolute inset-0" aria-hidden="true">
      <defs>
        <pattern id="grid" x="54" y="81" width={MAJOR} height={MAJOR} patternUnits="userSpaceOnUse">
          {[1, 2, 3, 4].map((n) => (
            <path
              key={n}
              d={`M${(MAJOR / 5) * n} 0v${MAJOR}M0 ${(MAJOR / 5) * n}h${MAJOR}`}
              stroke="#252d36"
            />
          ))}
          <path d={`M.5 0v${MAJOR}M0 .5h${MAJOR}`} stroke="#323a45" />
        </pattern>
      </defs>
      <rect width="100%" height="100%" fill="url(#grid)" />
      <g fill="none" stroke="#e8eaec" shapeRendering="crispEdges">
        <rect x="113.5" y="247.500" width="389" height="275" />
        <rect x="120.500" y="252.500" width="373" height="265" />
        <path d="M16.500 572v49.500H67M12.500 616.500h9v9h-9z" />
        <path d="M1084.500 567v90M1036 615.500h97" />
      </g>
      <g fill="#e8eaec" fontSize="20" className="font-['Lato'] font-light">
        <text x="18" y="569">Y</text>
        <text x="71" y="621">X</text>
      </g>
    </svg>
  );
}

function ViewCube() {
  return (
    <div className="absolute right-[15px] top-[38px] h-[160px] w-[120px] text-base leading-5 text-[#a4a8ad]">
      <div className="absolute left-[6px] top-[6px] size-[108px] rounded-full border-[11px] border-[#454c56]" />
      <button className="absolute left-[52px] top-0">北</button>
      <button className="absolute left-px top-[51px]">西</button>
      <button className="absolute right-0.5 top-[51px]">东</button>
      <button className="absolute left-[52px] top-[102px]">南</button>
      <button className="absolute left-[37px] top-[37px] flex size-[46px] items-center justify-center border border-[#7c8085] bg-[#93969a]">
        <span className="bg-[#868f9a] text-[28px] leading-[28px] text-[#3f454c]">上</span>
      </button>
      <button className="absolute left-9 top-[139px] flex h-[17px] w-12 items-center justify-between rounded-sm border border-[#a1a5ae] bg-[#858a95] px-1 text-[11px] text-[#40454e]">
        WCS
        <BigCaret className="text-[#9aa0aa]" />
      </button>
    </div>
  );
}

function NavBar() {
  return (
    <div className="absolute right-1 top-[220px] rounded-sm border border-[#60676f] bg-[#565d64]">
      <svg width="30" height="210" viewBox="0 0 30 210" fill="none" stroke="#3e444b" aria-hidden="true">
        <circle cx="25" cy="5" r="3" />
        <path d="M16 19h10v11c0 6-4 10-10 10S5 35 5 29.500 10 19 16 19z" />
        <circle cx="15.500" cy="29.500" r="6" />
        <circle cx="15.500" cy="29.500" r="8" strokeWidth=".5" />
        <path d="M13 49h5l-2.500 3zM13 119h5l-2.500 3zM13 157h5l-2.500 3z" fill="#3e444b" stroke="none" />
        <path d="M10 82c-2-4-4-7-6-9 2-2 4 0 6 3l-2-11c2-2 3 1 4 7l1-10c2-1 3 1 3 9l3-8c2 0 2 2 0 9l4-5c2 1 0 3-1 6-2 5-3 9-12 9z" />
        <path d="M4 89l14 16M18 90L6 105M3 88h4v4H3zM16 88h4v4h-4zM3 102h4v4H3z" />
        <circle cx="19" cy="104" r="5" />
        <path d="M22 108l4 4" strokeWidth="2" />
        <path d="M15 126l4 5h-2v14h2l-4 4-4-4h2v-14h-2z" />
        <path d="M10 133c-8 2-8 8 1 9M19 133c9 2 8 8-2 9m3-3l-3 3 3 3" />
        <path d="M3.500 169.500h6v6h-6zM11.500 169.500h6v6h-6zM19.500 169.500h6v6h-6zM3.500 178.500h16v13h-16z" />
        <path d="M8 181l7 4-7 4z" fill="#3e444b" />
        <circle cx="25" cy="205" r="3" />
      </svg>
    </div>
  );
}

// hanzi run one pixel larger than the latin text beside them
function Prompt({ text }: { text: string }) {
  return text.split(/([\u4e00-\u9fa5]+)/).map((part, i) => (
    <span key={i} className={i % 2 ? 'text-[13px]' : 'text-xs'}>
      {part}
    </span>
  ));
}

const history = [
  '当前矩形模式:  标高=841.0000',
  '指定第一个角点或 [倒角(C)/标高(E)/圆角(F)/厚度(T)/宽度(W)]:',
  '指定另一个角点或 [面积(A)/尺寸(D)/旋转(R)]: D',
];

function CommandLine() {
  return (
    <div className="absolute bottom-0 left-[251px] right-[246px] font-['DejaVu_Sans_Mono','Noto_Sans_CJK_SC',monospace]">
      <div className="mb-[3px] ml-[60px] flex flex-col items-start gap-[3px] whitespace-pre leading-[17px] text-[#dedede]">
        {history.map((line, i) => (
          <p key={line} className={clsx('h-[17px] rounded-xs bg-[#555a5f] px-0.5', i === 0 && 'text-[#b4b7ba]')}>
            <Prompt text={line} />
          </p>
        ))}
      </div>
      <div className="flex h-[27px] border border-[#777] bg-white leading-4 text-black">
        <div className="flex w-[53px] shrink-0 items-center bg-linear-to-b from-[#6e6e6e] to-[#3c3c3c] pl-[3px]">
          <Icon w={6} h={18}>
            <path d="M1.500 0v18M4.500 0v18" stroke="#aaa" strokeWidth="2" strokeDasharray="2 1" />
          </Icon>
          <button aria-label="关闭命令行" className="ml-[6px]">
            <Icon w={10} h={10}><path d="M1 1l8 8M9 1L1 9" stroke="#fff" strokeWidth="1.500" /></Icon>
          </button>
          <button aria-label="自定义" className="ml-[10px]">
            <Icon w={14} h={14}>
              <path d="M1 4l3 1 1-1-1-3c3-1 5 1 4 4l6 6-2 3-7-6C3 9 1 7 1 4z" fill="#eee" stroke="none" />
            </Icon>
          </button>
        </div>
        <label htmlFor="command" className="flex shrink-0 items-center whitespace-pre pl-[5px]">
          <Icon w={16} h={14}>
            <path d="M1.500 2.500h12v9h-12z" stroke="#aaa" strokeDasharray="2 1" />
            <Dot x={14} y={12} r={1.500} />
            <Dot x={1.500} y={2.500} r={1} />
          </Icon>
          <Caret className="ml-[2px] mr-[7px] text-[#888]" />
          <span className="text-xs font-bold">RECTANG</span>
          <span className="ml-1">
            <Prompt text="指定矩形的长度 <841.0000>:" />
          </span>
        </label>
        <input id="command" defaultValue="841" className="mt-0.5 min-w-0 flex-1 pl-[7px] text-xs outline-none" />
        <button aria-label="最近使用的命令" className="mr-[10px]">
          <BigCaret className="rotate-180" />
        </button>
      </div>
      <div className="pointer-events-none absolute -bottom-2 -right-[2px] left-[321px] h-[35px] border-7 border-b-8 border-r-8 border-[#fb3a3a]" />
    </div>
  );
}

function DrawingArea() {
  return (
    <main className="relative mr-1 mt-[5px] min-w-0 flex-1 bg-[#212830]">
      <GridDrawing />
      <div className="relative flex justify-between pl-[3px] pr-3 pt-[5px] text-xs leading-[17px] text-[#e8eaec]">
        <div className="flex">
          <button>[−]</button>
          <button>[俯视]</button>
          <button>[二维线框]</button>
        </div>
        <div className="flex items-center gap-[10px] pt-px">
          <button aria-label="最小化视口"><Icon w={10} h={10}><path d="M0 7.500h10" stroke="#fff" strokeWidth="3" /></Icon></button>
          <button aria-label="还原视口">
            <Icon w={10} h={10}>
              <path d="M1 3h6v6H1z" stroke="#fff" strokeWidth="2" />
              <path d="M3 .500h6.500V7" stroke="#fff" />
            </Icon>
          </button>
          <button aria-label="关闭视口"><Icon w={10} h={10}><path d="M1 1l8 8M9 1L1 9" stroke="#fff" strokeWidth="2" /></Icon></button>
        </div>
      </div>
      <ViewCube />
      <NavBar />
      <CommandLine />
    </main>
  );
}

/* ---------- bottom bars ---------- */

function LayoutTabs() {
  const shape = '[clip-path:polygon(0_0,100%_0,calc(100%-8px)_100%,8px_100%)]';
  return (
    <nav className="flex h-5 shrink-0 items-start gap-0.5 border-t border-[#666] bg-[#383838] pl-[10px] text-xs leading-[17px]">
      <button className={clsx('w-[49px] bg-linear-to-b from-[#5b5b5b] to-[#7a7a7a] font-bold text-white', shape)}>模型</button>
      <button className={clsx('w-[52px] bg-[#4e4e4e] text-[#a8a8a8]', shape)}>布局1</button>
      <button className={clsx('w-[52px] bg-[#4e4e4e] text-[#a8a8a8]', shape)}>布局2</button>
      <button
        aria-label="新建布局"
        className="ml-0.5 flex h-[17px] w-[22px] items-center justify-center bg-[#4e4e4e] [clip-path:polygon(0_0,100%_0,calc(100%-4px)_100%,4px_100%)]"
      >
        <Icon w={9} h={9}><path d="M.500 4.500h8M4.500 .500v8" strokeWidth="1.500" /></Icon>
      </button>
    </nav>
  );
}

interface StatusToggleProps {
  name: string;
  on?: boolean;
  className?: string;
  children: ReactNode;
}

function StatusToggle({ name, on, className = 'w-[25px]', children }: StatusToggleProps) {
  return (
    <button aria-label={name} aria-pressed={on} className={clsx('flex shrink-0 justify-center', className)}>
      <span className={clsx('flex h-[22px] w-[22px] items-center justify-center', on && 'bg-[#5b8fc7]')}>
        <Icon w={18} h={18}>{children}</Icon>
      </span>
    </button>
  );
}

function StatusCaret({ name }: { name: string }) {
  return (
    <button aria-label={name} className="flex w-[14px] shrink-0 justify-center">
      <BigCaret className="w-[7px]" />
    </button>
  );
}

function Sep() {
  return <span className="mx-px h-full w-px shrink-0 bg-[#858585]" />;
}

const needle = 'M8 1l2 8 6 7h-4l-4-4-4 4H0l6-7z';

function StatusBar() {
  return (
    <footer className="relative flex h-[29px] shrink-0 border-b border-black bg-[#383838] pl-[139px] text-xs leading-4 text-white">
      <div className="flex min-w-0 flex-1 items-center border border-[#858585] bg-[#4d4d4d]">
        <button className="w-[183px] shrink-0 whitespace-nowrap pr-[7px] text-right">2472.6087, 97.0182, 0.0000</button>
        <button className="w-[29px] shrink-0 whitespace-nowrap">模型</button>
        <StatusToggle name="栅格" on>
          <path d="M5.500 1v16M9.500 1v16M13.500 1v16M1 5.500h16M1 9.500h16M1 13.500h16" stroke="#fff" />
        </StatusToggle>
        <StatusToggle name="捕捉模式" className="w-6">
          <path d="M2 4h16M2 9h16M2 14h16" strokeWidth="2" strokeDasharray="2 3" />
        </StatusToggle>
        <StatusCaret name="捕捉设置" />
        <Sep />
        <StatusToggle name="推断约束">
          <path d="M9.500 14V2.500h6v5h-6" />
          <path d="M1 12h7v4H1zM6 9h3v4H6z" fill="#eee" stroke="none" />
        </StatusToggle>
        <StatusToggle name="动态输入" on>
          <path d="M1 5h6M4 2v6" stroke="#fff" />
          <path d="M7 11h10v4H7z" fill="#fff" stroke="none" />
        </StatusToggle>
        <StatusToggle name="正交" className="w-[25px]"><path d="M2.500 1v14.500H17M2.500 10.500h5v5" /></StatusToggle>
        <StatusToggle name="极轴追踪" className="w-6" on>
          <circle cx="8" cy="9" r="6.500" stroke="#fff" />
          <path d="M8 9h9M8 9l6-6" stroke="#fff" />
          <circle cx="8" cy="9" r="1.500" fill="#fff" />
        </StatusToggle>
        <StatusCaret name="极轴设置" />
        <StatusToggle name="等轴测草图">
          <path d="M8.500 1v16" /><path d="M2 15L15 3" stroke="#d66" /><path d="M5 6l7 7" stroke={G} />
        </StatusToggle>
        <StatusCaret name="等轴测平面" />
        <StatusToggle name="对象捕捉追踪" on><path d="M1 15.500h16M1 15L15 3" stroke="#fff" strokeWidth="1.300" /></StatusToggle>
        <StatusToggle name="对象捕捉" className="w-6" on>
          <path d="M6 3.500h10.500v12h-13V7M1.500 1.500h4v4h-4z" stroke="#fff" />
        </StatusToggle>
        <StatusCaret name="捕捉选项" />
        <StatusToggle name="线宽" className="w-[27px]">
          <path d="M1 2.500h16" /><path d="M1 7h16M1 11h8" strokeWidth="2" /><path d="M1 15.500h16" strokeWidth="3" />
        </StatusToggle>
        <StatusToggle name="透明度" on>
          <path d="M1.500 1.500h15v15h-15z" stroke="#fff" />
          <path d="M3 4.500h12M3 10.500h12" stroke="#fff" strokeWidth="3" strokeDasharray="3 3" />
          <path d="M6 7.500h9M6 13.500h9" stroke="#fff" strokeWidth="3" strokeDasharray="3 3" />
        </StatusToggle>
        <Sep />
        <StatusToggle name="选择循环" className="w-[23px]">
          <path d="M1 3.500h5M3.500 1v5M5.500 14V6.500H14" /><path d="M7 8h10v9H7z" fill={G} stroke="none" />
        </StatusToggle>
        <Sep />
        <StatusToggle name="三维对象捕捉" className="w-[22px]">
          <path d="M5 6l4-4h8v7l-4 4H6V6h7v7M13 6l4-4" /><path d="M1.500 12.500h4v4h-4z" stroke="#e8a070" />
        </StatusToggle>
        <StatusCaret name="三维捕捉设置" />
        <Sep />
        <StatusToggle name="动态 UCS" on>
          <path d="M3.500 2v12.500H16M1 5l2.500-3L6 5M14 12l3 2.500-3 2.500" stroke="#fff" strokeWidth="1.300" />
          <path d="M12 2L8 7h3l-2 4 5-5h-3z" fill="#fff" stroke="none" />
        </StatusToggle>
        <StatusToggle name="选择过滤">
          <path d="M4 6h8v10H4zM4 6l4-4h8v9l-4 5" strokeDasharray="3 1" />
          <Dot x={3} y={6} /><Dot x={12} y={15} /><Dot x={3} y={15} />
        </StatusToggle>
        <StatusCaret name="过滤选项" />
        <StatusToggle name="小控件" on>
          <path d="M9 1.500l6.500 4v7L9 16.500l-6.500-4v-7zM9 1.500v8l-6 4M9 9.500l6 4" stroke="#fff" />
          <circle cx="9" cy="9.500" r="2" stroke="#fff" />
        </StatusToggle>
        <StatusCaret name="小控件选项" />
        <Sep />
        <StatusToggle name="注释可见性" className="w-6" on>
          <path d={needle} fill="#fff" stroke="none" /><circle cx="14" cy="4" r="2.500" stroke="#fff" />
        </StatusToggle>
        <StatusToggle name="自动缩放" className="w-6">
          <path d={needle} fill="#ddd" stroke="none" /><path d="M15 0l-4 5h3l-2 4 5-5h-3z" fill="#ddd" stroke="none" />
        </StatusToggle>
        <StatusToggle name="注释比例图标" className="w-6"><path d={needle} fill="#ddd" stroke="none" /></StatusToggle>
        <button className="ml-1 flex shrink-0 items-center gap-0.5 whitespace-nowrap">
          1:1 / 100%
          <BigCaret className="w-[7px]" />
        </button>
        <Sep />
        <StatusToggle name="切换工作空间">
          <circle cx="9" cy="9" r="4.500" stroke="#ddd" strokeWidth="3" />
          <circle cx="9" cy="9" r="6.500" stroke="#ddd" strokeWidth="2.500" strokeDasharray="2.600 2.500" />
        </StatusToggle>
        <button className="ml-1 flex shrink-0 items-center gap-1 whitespace-nowrap">
          草图与注释
          <BigCaret className="w-[7px]" />
        </button>
        <span className="w-0.5" />
        <Sep />
        <StatusToggle name="注释监视器" on><path d="M1 9h16M9 1v16" stroke="#fff" strokeWidth="2" /></StatusToggle>
        <Sep />
        <StatusToggle name="单位"><path d="M5 1h8v3h-3v1h3v3h-3v1h3v3h-3v1h3v4H5z" fill="#ddd" stroke="none" /></StatusToggle>
        <button className="ml-1 flex flex-1 items-center justify-between whitespace-nowrap pr-1">
          小数
          <BigCaret className="w-[7px]" />
        </button>
        <Sep />
        <StatusToggle name="快捷特性">
          <path d="M3.500 1.500h11v15h-11z" /><path d="M5 5h2M9 5h4M5 9h2M9 9h4M5 13h2M9 13h4" strokeWidth="1.500" />
        </StatusToggle>
        <StatusToggle name="锁定用户界面" on>
          <path d="M1.500 14V2.500h15V8M1 4.500h16M1.500 13.500h8" stroke="#fff" />
          <path d="M10 11h7v6h-7z" fill="#fff" stroke="none" /><path d="M11.500 11V9h4v2" stroke="#fff" />
        </StatusToggle>
        <StatusCaret name="锁定选项" />
        <Sep />
        <StatusToggle name="隔离对象">
          <path d="M2.500 2.500h5v4h-5zM5 16l3.500-6 3.500 6z" /><circle cx="12" cy="6" r="3" />
        </StatusToggle>
        <Sep />
        <StatusToggle name="硬件加速" on>
          <circle cx="9" cy="9" r="7.500" fill="#a9c6e6" stroke="#fff" /><path d="M5 13l8-8M5 8l3 3" stroke="#fff" strokeWidth="2" />
        </StatusToggle>
        <Sep />
        <StatusToggle name="性能反馈" className="w-[29px]"><path d="M6.500 3.500h10v6h-8l-6 6M9 6h2M13 6h2" /></StatusToggle>
        <StatusToggle name="全屏显示" className="w-[29px]">
          <path d="M1.500 2.500h15v13h-15zM4 7V5h2M12 5h2v2M4 11v2h2M12 13h2v-2M6 11l6-5" />
        </StatusToggle>
        <StatusToggle name="自定义" className="w-[23px]"><path d="M1 4h16M1 9h16M1 14h16" strokeWidth="2" /></StatusToggle>
      </div>
      <p className="pointer-events-none absolute right-[10px] top-[-3px] font-['Liberation_Sans'] text-base leading-6 text-white/60">
        https://blog.csdn.net/qq_41068712
      </p>
    </footer>
  );
}

export default function App() {
  return (
    <div className="relative flex h-screen flex-col overflow-hidden bg-[#383838] font-['Noto_Sans','Noto_Sans_CJK_SC',sans-serif]">
      <AppButton />
      <TitleBar />
      <RibbonTabs />
      <Ribbon />
      <FileTabs />
      <div className="flex min-h-0 flex-1 bg-[#5b5b5b]">
        <ToolPalette />
        <DrawingArea />
      </div>
      <LayoutTabs />
      <StatusBar />
    </div>
  );
}
